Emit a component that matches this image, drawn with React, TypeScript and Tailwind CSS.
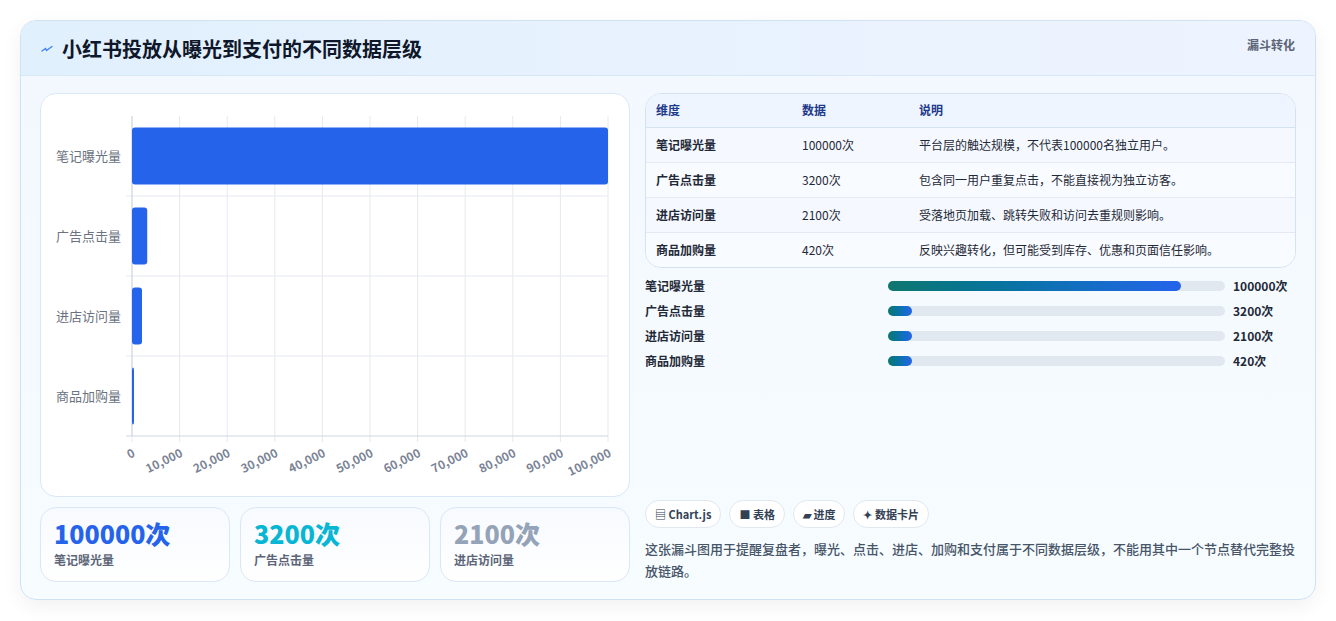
const ROWS = [
  { name: "笔记曝光量", value: 100000, desc: "平台层的触达规模，不代表100000名独立用户。" },
  { name: "广告点击量", value: 3200, desc: "包含同一用户重复点击，不能直接视为独立访客。" },
  { name: "进店访问量", value: 2100, desc: "受落地页加载、跳转失败和访问去重规则影响。" },
  { name: "商品加购量", value: 420, desc: "反映兴趣转化，但可能受到库存、优惠和页面信任影响。" },
];

const X0 = 91;
const X1 = 567;
const Y0 = 22;
const Y1 = 342;
const BAND = (Y1 - Y0) / 4;

function FunnelChart() {
  const ticks = Array.from({ length: 11 }, (_, i) => i * 10000);
  return (
    <svg width="588" height="401" className="block">
      {ticks.map((t) => {
        const x = X0 + ((X1 - X0) * t) / 100000;
        return <line key={t} x1={x} x2={x} y1={Y0} y2={Y1 + 6} stroke="#e5e9f0" />;
      })}
      {[1, 2, 3].map((i) => (
        <line key={i} x1={X0 - 6} x2={X1} y1={Y0 + BAND * i} y2={Y0 + BAND * i} stroke="#e5e9f0" />
      ))}
      <line x1={X0} x2={X0} y1={Y0} y2={Y1} stroke="#cfd5e0" />
      <line x1={X0 - 6} x2={X1} y1={Y1} y2={Y1} stroke="#cfd5e0" />
      {ROWS.map((r, i) => {
        const w = Math.max(((X1 - X0) * r.value) / 100000, 1.5);
        const yc = Y0 + BAND * i + BAND / 2;
        return (
          <g key={r.name}>
            <rect x={X0} y={yc - 28.5} width={w} height={57} rx={3} fill="#2563eb" />
            <text x={X0 - 11} y={yc + 5} textAnchor="end" fontSize="13" fill="#6b7280">
              {r.name}
            </text>
          </g>
        );
      })}
      {ticks.map((t) => {
        const x = X0 + ((X1 - X0) * t) / 100000;
        return (
          <text
            key={t}
            x={x + 4}
            y={Y1 + 20}
            textAnchor="end"
            fontSize="12"
            fontWeight="700"
            fill="#7b8496"
            transform={`rotate(-26 ${x + 4} ${Y1 + 20})`}
          >
            {t.toLocaleString("en-US")}
          </text>
        );
      })}
    </svg>
  );
}

function Stat({ value, label, color }: { value: string; label: string; color: string }) {
  return (
    <div className="flex-1 rounded-2xl border border-[#dbe7f5] bg-gradient-to-b from-[#f7faff] to-white px-[13px] pt-[9px] pb-[12px]">
      <div className={`text-[25px] font-extrabold leading-[32px] ${color}`}>{value}</div>
      <div className="mt-[2px] text-[12px] font-semibold text-[#5b6577]">{label}</div>
    </div>
  );
}

export default function App() {
  return (
    <div
      className="min-h-[621px] bg-white px-[20px] pt-[20px]"
      style={{ fontFamily: '"Noto Sans CJK SC", "Noto Sans", sans-serif' }}
    >
      <div className="h-[580px] overflow-hidden rounded-2xl border border-[#cfe3f3] bg-gradient-to-b from-[#f3f8ff] to-[#f7fcff] shadow-[0_6px_20px_rgba(15,23,42,0.06)]">
        <header className="flex h-[55px] items-start justify-between border-b border-[#d6e8f7] bg-gradient-to-r from-[#e1f0fd] to-[#eef4ff] pl-[20px] pr-[20px]">
          <div className="flex items-center gap-[9px] pt-[13px]">
            <svg width="12" height="8" viewBox="0 0 12 8">
              <path d="M1 6 L4.5 3.5 L5.5 5.5 L11 1.5" stroke="#3b82f6" strokeWidth="1.3" fill="none" strokeLinecap="round" />
            </svg>
            <h1 className="text-[20px] font-bold text-[#0f172a]">小红书投放从曝光到支付的不同数据层级</h1>
          </div>
          <div className="pt-[15px] text-[12px] font-bold text-[#5b6577]">漏斗转化</div>
        </header>

        <div className="flex gap-[15px] px-[19px] pt-[17px]">
          <div className="flex w-[590px] flex-col gap-[10px]">
            <div className="h-[404px] rounded-2xl border border-[#dbe7f5] bg-white">
              <FunnelChart />
            </div>
            <div className="flex gap-[10px]">
              <Stat value="100000次" label="笔记曝光量" color="text-[#2563eb]" />
              <Stat value="3200次" label="广告点击量" color="text-[#06b6d4]" />
              <Stat value="2100次" label="进店访问量" color="text-[#94a3b8]" />
            </div>
          </div>

          <div className="flex flex-1 flex-col">
            <div className="overflow-hidden rounded-2xl border border-[#d5e2f0] bg-white">
              <table className="w-full text-left text-[12px]">
                <thead>
                  <tr className="h-[33px] border-b border-[#d5e2f0] bg-[#eef5fe] text-[#1e3a8a]">
                    <th className="w-[156px] pl-[10px] font-bold">维度</th>
                    <th className="w-[117px] font-bold">数据</th>
                    <th className="font-bold">说明</th>
                  </tr>
                </thead>
                <tbody>
                  {ROWS.map((r, i) => (
                    <tr key={r.name} className={`h-[35px] text-[#1f2937] ${i < 3 ? "border-b border-[#e3eaf3]" : ""} ${i % 2 ? "bg-[#f8fbff]" : "bg-[#f5f9ff]"}`}>
                      <td className="pl-[10px] font-semibold">{r.name}</td>
                      <td>{r.value}次</td>
                      <td>{r.desc}</td>
                    </tr>
                  ))}
                </tbody>
              </table>
            </div>

            <div className="mt-[8px] flex flex-col gap-[6px]">
              {ROWS.map((r) => {
                const pct = Math.max((r.value / 100000) * 87, 7);
                return (
                  <div key={r.name} className="flex h-[19px] items-center">
                    <div className="w-[243px] text-[12px] font-semibold text-[#1f2937]">{r.name}</div>
                    <div className="h-[10px] w-[337px] rounded-full bg-[#e2e8f0]">
                      <div
                        className="h-full rounded-full bg-gradient-to-r from-[#0f766e] to-[#2563eb]"
                        style={{ width: `${pct}%` }}
                      />
                    </div>
                    <div className="ml-[8px] text-[12px] font-bold text-[#1f2937]">{r.value}次</div>
                  </div>
                );
              })}
            </div>

            <div className="mt-auto">
              <div className="flex gap-[8px]">
                {["▤ Chart.js", "■ 表格", "▰ 进度", "✦ 数据卡片"].map((c) => (
                  <span key={c} className="rounded-full border border-[#e2e8f0] bg-white px-[9px] py-[5px] text-[11px] font-bold text-[#334155]">
                    {c}
                  </span>
                ))}
              </div>
              <p className="mt-[10px] text-[13px] font-medium leading-[22px] text-[#475569]">
                这张漏斗图用于提醒复盘者，曝光、点击、进店、加购和支付属于不同数据层级，不能用其中一个节点替代完整投放链路。
              </p>
            </div>
          </div>
        </div>
      </div>
    </div>
  );
}
